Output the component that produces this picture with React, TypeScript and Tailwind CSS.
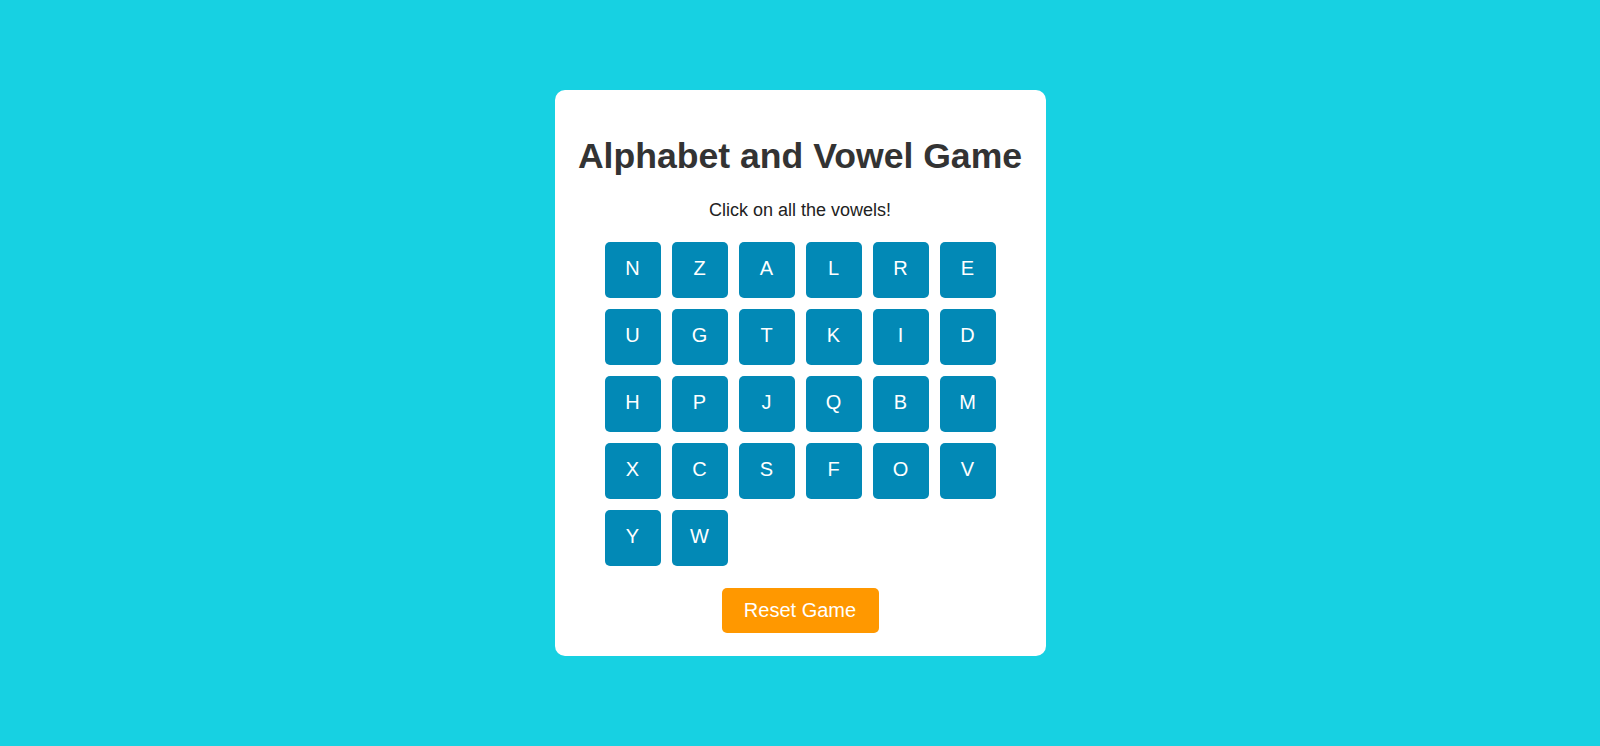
import { useState } from "react";

const LETTERS = ["N","Z","A","L","R","E","U","G","T","K","I","D","H","P","J","Q","B","M","X","C","S","F","O","V","Y","W"];

export default function App() {
    const [picked, setPicked] = useState<string[]>([]);
    const toggle = (l: string) => setPicked((p) => (p.includes(l) ? p : [...p, l]));

    return (
        <div className="min-h-screen w-full bg-[#17d1e2] flex items-center justify-center font-['Liberation_Sans',Arial,sans-serif]">
            <div className="w-[491px] bg-white rounded-[10px] flex flex-col items-center pt-[46px] pb-[23px]">
                <h1 className="text-[35.6px] leading-[1.15] font-bold text-[#333] mb-[23px]">Alphabet and Vowel Game</h1>
                <p className="text-[18px] leading-[1.15] text-[#222] mb-[22px]">Click on all the vowels!</p>
                <div className="grid grid-cols-[repeat(6,56px)] gap-[11px]">
                    {LETTERS.map((l) => (
                        <button
                            key={l}
                            onClick={() => toggle(l)}
                            className="w-[56px] h-[56px] rounded-[5px] bg-[#0289b6] text-white text-[20px] flex items-center justify-center pb-[4px]"
                        >
                            {l}
                        </button>
                    ))}
                </div>
                <button
                    onClick={() => setPicked([])}
                    className="mt-[22px] w-[157px] h-[45px] rounded-[5px] bg-[#ff9800] text-white text-[20px] flex items-center justify-center pb-[2px]"
                >
                    Reset Game
                </button>
            </div>
        </div>
    );
}
